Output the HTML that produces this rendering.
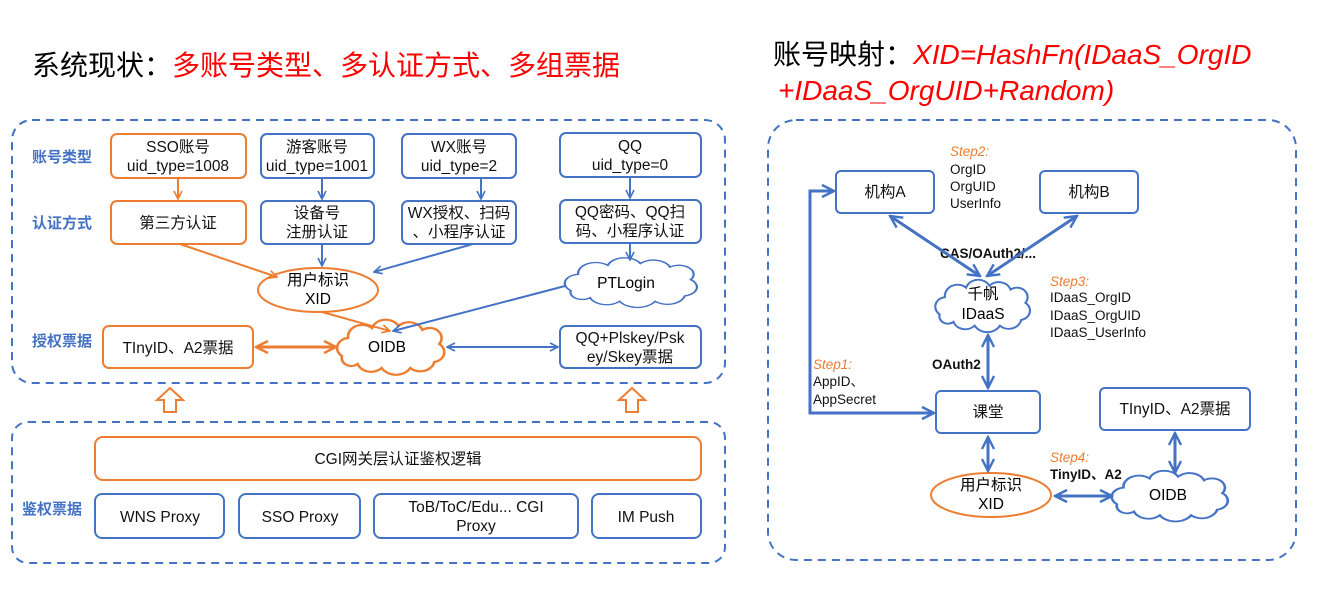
<!DOCTYPE html>
<html><head><meta charset="utf-8"><style>
html,body{margin:0;padding:0;background:#fff;}
svg{display:block;}
text{font-family:"Liberation Sans","Noto Sans CJK SC",sans-serif;}
</style></head><body>
<svg width="1341" height="599" viewBox="0 0 1341 599" xmlns="http://www.w3.org/2000/svg">
<defs>
<marker id="ab" viewBox="0 0 10 10" refX="9" refY="5" markerWidth="5" markerHeight="5" orient="auto-start-reverse" markerUnits="strokeWidth"><path d="M1,1 L9,5 L1,9" fill="none" stroke="#4472c4" stroke-width="1.6"/></marker>
<marker id="ab2" viewBox="0 0 10 10" refX="9" refY="5" markerWidth="5" markerHeight="5" orient="auto-start-reverse" markerUnits="strokeWidth"><path d="M1,1 L9,5 L1,9" fill="none" stroke="#4472c4" stroke-width="1.6"/></marker>
<marker id="ao" viewBox="0 0 10 10" refX="9" refY="5" markerWidth="5" markerHeight="5" orient="auto-start-reverse" markerUnits="strokeWidth"><path d="M1,1 L9,5 L1,9" fill="none" stroke="#ed7d31" stroke-width="1.6"/></marker>
<marker id="ao2" viewBox="0 0 10 10" refX="9" refY="5" markerWidth="5" markerHeight="5" orient="auto-start-reverse" markerUnits="strokeWidth"><path d="M1,1 L9,5 L1,9" fill="none" stroke="#ed7d31" stroke-width="1.6"/></marker>
<path id="cloud" d="M10,35 a10,10 0 0,1 5,-18 a12,12 0 0,1 20,-10 a12,12 0 0,1 22,-2 a12,12 0 0,1 20,4 a10,10 0 0,1 14,14 a10,10 0 0,1 -4,18 a12,12 0 0,1 -20,6 a14,14 0 0,1 -24,0 a12,12 0 0,1 -20,-4 a8,8 0 0,1 -13,-8 z"/>
</defs>

<!-- titles -->
<text x="32" y="75" font-size="28" fill="#000">系统现状：<tspan fill="#ff0000">多账号类型、多认证方式、多组票据</tspan></text>
<text x="773" y="64" font-size="28" fill="#000">账号映射：<tspan fill="#ff0000" font-style="italic">XID=HashFn(IDaaS_OrgID</tspan></text>
<text x="778" y="100" font-size="28" fill="#ff0000" font-style="italic">+IDaaS_OrgUID+Random)</text>

<!-- left dashed boxes -->
<rect x="12" y="120" width="713" height="263" rx="20" fill="none" stroke="#4472c4" stroke-width="2" stroke-dasharray="8,6"/>
<rect x="12" y="422" width="713" height="141" rx="16" fill="none" stroke="#4472c4" stroke-width="2" stroke-dasharray="8,6"/>

<g font-size="15" font-weight="bold" fill="#4472c4">
<text x="32" y="162">账号类型</text>
<text x="32" y="228">认证方式</text>
<text x="32" y="346">授权票据</text>
<text x="22" y="514">鉴权票据</text>
</g>

<g fill="#fff" stroke-width="2">
<rect x="111" y="134" width="135" height="44" rx="6" stroke="#ed7d31"/>
<rect x="261" y="134" width="113" height="44" rx="6" stroke="#4472c4"/>
<rect x="402" y="134" width="114" height="44" rx="6" stroke="#4472c4"/>
<rect x="560" y="133" width="141" height="44" rx="6" stroke="#4472c4"/>
<rect x="111" y="201" width="135" height="43" rx="6" stroke="#ed7d31"/>
<rect x="261" y="201" width="113" height="43" rx="6" stroke="#4472c4"/>
<rect x="402" y="201" width="114" height="43" rx="6" stroke="#4472c4"/>
<rect x="560" y="200" width="141" height="43" rx="6" stroke="#4472c4"/>
<rect x="103" y="326" width="150" height="42" rx="6" stroke="#ed7d31"/>
<rect x="560" y="326" width="141" height="42" rx="6" stroke="#4472c4"/>
<rect x="95" y="437" width="606" height="43" rx="8" stroke="#ed7d31"/>
<rect x="95" y="494" width="129" height="44" rx="7" stroke="#4472c4"/>
<rect x="239" y="494" width="121" height="44" rx="7" stroke="#4472c4"/>
<rect x="374" y="494" width="204" height="44" rx="7" stroke="#4472c4"/>
<rect x="592" y="494" width="109" height="44" rx="7" stroke="#4472c4"/>
</g>

<g font-size="15.5" fill="#111" text-anchor="middle">
<text x="178" y="152">SSO账号</text><text x="178" y="171">uid_type=1008</text>
<text x="317" y="152">游客账号</text><text x="317" y="171">uid_type=1001</text>
<text x="459" y="152">WX账号</text><text x="459" y="171">uid_type=2</text>
<text x="630" y="151">QQ</text><text x="630" y="170">uid_type=0</text>
<text x="178" y="228">第三方认证</text>
<text x="317" y="218">设备号</text><text x="317" y="237">注册认证</text>
<text x="459" y="218">WX授权、扫码</text><text x="459" y="237">、小程序认证</text>
<text x="630" y="217">QQ密码、QQ扫</text><text x="630" y="236">码、小程序认证</text>
<text x="178" y="353">TInyID、A2票据</text>
<text x="630" y="343">QQ+Plskey/Psk</text><text x="630" y="362">ey/Skey票据</text>
<text x="398" y="464">CGI网关层认证鉴权逻辑</text>
<text x="160" y="522">WNS Proxy</text>
<text x="300" y="522">SSO Proxy</text>
<text x="476" y="512">ToB/ToC/Edu... CGI</text><text x="476" y="531">Proxy</text>
<text x="646" y="522">IM Push</text>
</g>

<!-- ellipse & clouds left -->
<ellipse cx="318" cy="290" rx="60" ry="22" fill="#fff" stroke="#ed7d31" stroke-width="2"/>
<text x="318" y="285" font-size="15.5" text-anchor="middle">用户标识</text>
<text x="318" y="304" font-size="15.5" text-anchor="middle">XID</text>
<use href="#cloud" transform="translate(556,259) scale(1.48,0.9)" fill="#fff" stroke="#4472c4" stroke-width="1.5"/>
<text x="626" y="288" font-size="15.5" text-anchor="middle">PTLogin</text>
<use href="#cloud" transform="translate(330,321) scale(1.2,1.0)" fill="#fff" stroke="#ed7d31" stroke-width="2.2"/>
<text x="387" y="352" font-size="15.5" text-anchor="middle">OIDB</text>

<!-- left arrows -->
<g fill="none" stroke-width="2">
<line x1="178" y1="178" x2="178" y2="199" stroke="#ed7d31" marker-end="url(#ao2)"/>
<line x1="322" y1="178" x2="322" y2="199" stroke="#4472c4" marker-end="url(#ab2)"/>
<line x1="481" y1="178" x2="481" y2="199" stroke="#4472c4" marker-end="url(#ab2)"/>
<line x1="630" y1="177" x2="630" y2="198" stroke="#4472c4" marker-end="url(#ab2)"/>
<line x1="180" y1="244" x2="277" y2="277" stroke="#ed7d31" marker-end="url(#ao2)"/>
<line x1="322" y1="244" x2="322" y2="266" stroke="#4472c4" marker-end="url(#ab2)"/>
<line x1="473" y1="244" x2="374" y2="272" stroke="#4472c4" marker-end="url(#ab2)"/>
<line x1="630" y1="243" x2="630" y2="260" stroke="#4472c4" marker-end="url(#ab2)"/>
<line x1="322" y1="312" x2="390" y2="331" stroke="#ed7d31" marker-end="url(#ao2)"/>
<line x1="565" y1="286" x2="393" y2="331" stroke="#4472c4" marker-end="url(#ab2)"/>
<line x1="447" y1="347" x2="558" y2="347" stroke="#4472c4" marker-start="url(#ab2)" marker-end="url(#ab2)"/>
<line x1="256" y1="347" x2="336" y2="347" stroke="#ed7d31" stroke-width="3" marker-start="url(#ao)" marker-end="url(#ao)"/>
</g>
<!-- hollow up arrows -->
<path d="M164,412 L164,400 L157,400 L170,388 L183,400 L176,400 L176,412 Z" fill="#fff" stroke="#ed7d31" stroke-width="2"/>
<path d="M626,412 L626,400 L619,400 L632,388 L645,400 L638,400 L638,412 Z" fill="#fff" stroke="#ed7d31" stroke-width="2"/>

<!-- right -->
<rect x="768" y="120" width="528" height="440" rx="28" fill="none" stroke="#4472c4" stroke-width="2" stroke-dasharray="8,6"/>
<g fill="#fff" stroke="#4472c4" stroke-width="2">
<rect x="836" y="171" width="98" height="42" rx="5"/>
<rect x="1040" y="171" width="98" height="42" rx="5"/>
<rect x="936" y="391" width="104" height="42" rx="5"/>
<rect x="1100" y="388" width="150" height="42" rx="5"/>
</g>
<g font-size="15.5" fill="#111" text-anchor="middle">
<text x="885" y="197">机构A</text>
<text x="1089" y="197">机构B</text>
<text x="988" y="417">课堂</text>
<text x="1175" y="414">TInyID、A2票据</text>
</g>
<g font-size="13.5" fill="#111">
<text x="950" y="156" fill="#ed7d31" font-style="italic">Step2:</text>
<text x="950" y="174">OrgID</text><text x="950" y="191">OrgUID</text><text x="950" y="208">UserInfo</text>
<text x="1050" y="286" fill="#ed7d31" font-style="italic">Step3:</text>
<text x="1050" y="302">IDaaS_OrgID</text><text x="1050" y="320">IDaaS_OrgUID</text><text x="1050" y="337">IDaaS_UserInfo</text>
<text x="813" y="369" fill="#ed7d31" font-style="italic">Step1:</text>
<text x="813" y="386">AppID、</text><text x="813" y="404">AppSecret</text>
<text x="1050" y="462" fill="#ed7d31" font-style="italic">Step4:</text>
<text x="1050" y="479" font-weight="bold">TinyID、A2</text>
<text x="932" y="369" font-weight="bold">OAuth2</text>
<text x="940" y="258" font-weight="bold">CAS/OAuth2/...</text>
</g>
<use href="#cloud" transform="translate(929,281) scale(1.06,0.95)" fill="#fff" stroke="#4472c4" stroke-width="2"/>
<text x="983" y="299" font-size="15.5" text-anchor="middle">千帆</text>
<text x="983" y="319" font-size="15.5" text-anchor="middle">IDaaS</text>
<ellipse cx="991" cy="495" rx="60" ry="22" fill="#fff" stroke="#ed7d31" stroke-width="2"/>
<text x="991" y="490" font-size="15.5" text-anchor="middle">用户标识</text>
<text x="991" y="509" font-size="15.5" text-anchor="middle">XID</text>
<use href="#cloud" transform="translate(1104,472) scale(1.3,0.92)" fill="#fff" stroke="#4472c4" stroke-width="2"/>
<text x="1168" y="500" font-size="15.5" text-anchor="middle">OIDB</text>
<g fill="none" stroke="#4472c4" stroke-width="3">
<line x1="890" y1="216" x2="980" y2="276" marker-start="url(#ab)" marker-end="url(#ab)"/>
<line x1="1077" y1="216" x2="987" y2="276" marker-start="url(#ab)" marker-end="url(#ab)"/>
<line x1="988" y1="335" x2="988" y2="388" marker-start="url(#ab)" marker-end="url(#ab)"/>
<line x1="988" y1="437" x2="988" y2="471" marker-start="url(#ab)" marker-end="url(#ab)"/>
<line x1="1175" y1="433" x2="1175" y2="473" marker-start="url(#ab)" marker-end="url(#ab)"/>
<line x1="1055" y1="496" x2="1112" y2="496" marker-start="url(#ab)" marker-end="url(#ab)"/>
<polyline points="834,191 810,191 810,413 934,413" marker-start="url(#ab)" marker-end="url(#ab)"/>
</g>
</svg>
</body></html>
